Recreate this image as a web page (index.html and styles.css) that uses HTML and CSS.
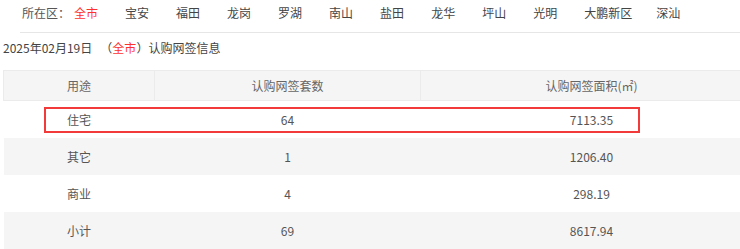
FILE: index.html
```html
<!DOCTYPE html>
<html lang="zh-CN">
<head>
<meta charset="utf-8">
<link rel="stylesheet" href="styles.css">
</head>
<body>
<div class="nav">
  <span class="label">所在区：</span>
  <span class="item active">全市</span>
  <span class="item">宝安</span>
  <span class="item">福田</span>
  <span class="item">龙岗</span>
  <span class="item">罗湖</span>
  <span class="item">南山</span>
  <span class="item">盐田</span>
  <span class="item">龙华</span>
  <span class="item">坪山</span>
  <span class="item">光明</span>
  <span class="item wide">大鹏新区</span>
  <span class="item">深汕</span>
</div>
<div class="title">2025年02月19日&nbsp;&nbsp;&nbsp;（<span class="red">全市</span>）认购网签信息</div>
<div class="tablewrap">
  <table class="data">
    <thead>
      <tr><th class="c1">用途</th><th class="c2">认购网签套数</th><th class="c3">认购网签面积(㎡)</th></tr>
    </thead>
    <tbody>
      <tr><td>住宅</td><td>64</td><td>7113.35</td></tr>
      <tr><td>其它</td><td>1</td><td>1206.40</td></tr>
      <tr><td>商业</td><td>4</td><td>298.19</td></tr>
      <tr><td>小计</td><td>69</td><td>8617.94</td></tr>
    </tbody>
  </table>
  <div class="highlight"></div>
</div>
</body>
</html>
```
FILE: styles.css
```css
html, body {
  margin: 0;
  padding: 0;
  overflow: hidden;
  background: #fff;
}
body {
  font-family: "Noto Sans CJK SC", "Noto Sans", sans-serif;
  font-size: 12px;
  color: #444;
}
.nav {
  margin-left: 20px;
  border-bottom: 1px solid #e6e6e6;
  display: flex;
  align-items: flex-start;
  padding-top: 5px;
  box-sizing: border-box;
  height: 33px;
  line-height: 16px;
  padding-left: 2px;
  white-space: nowrap;
}
.label {
  color: #555;
  margin-right: 4px;
}
.item {
  color: #444;
  margin-right: 27px;
}
.item.wide {
  margin-right: 24px;
}
.item.active, .red {
  color: #ff3030;
}
.title {
  margin-left: 3px;
  margin-top: 7px;
  line-height: 16px;
  color: #444;
  white-space: nowrap;
}
.tablewrap {
  position: relative;
  margin-left: 3px;
  margin-top: 14px;
  width: 760px;
}
.data {
  border-collapse: collapse;
  width: 760px;
  table-layout: fixed;
}
.data th {
  background: #f5f5f5;
  color: #666;
  font-weight: normal;
  height: 29px;
  border: 1px solid #ebebeb;
  padding: 0;
  text-align: center;
}
.data th.c1 { width: 150px; }
.data th.c2 { width: 265px; }
.data td {
  height: 37px;
  padding: 0;
  text-align: center;
  color: #555;
}
.data tbody tr:nth-child(even) td {
  background: #f5f5f5;
}
.highlight {
  position: absolute;
  left: 41px;
  top: 37px;
  width: 596px;
  height: 26px;
  box-sizing: border-box;
  border: 2px solid #f23a3a;
}
```
